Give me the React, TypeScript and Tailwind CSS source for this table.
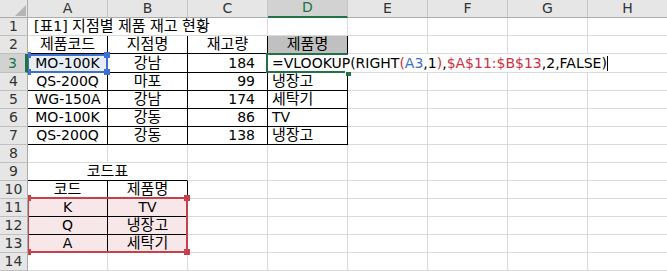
import React from "react";

type Line = "g" | "k" | "n";
type Align = "l" | "c" | "r";

interface CellDef {
  t?: React.ReactNode;
  a?: Align;
  r?: Line;
  b?: Line;
  bg?: string;
  span?: 2 | 3 | 5;
  pad?: string;
}

const RIGHT_LINE: Record<Line, string> = {
  g: "border-r-[#dadada]",
  k: "border-r-black",
  n: "border-r-white",
};
const BOTTOM_LINE: Record<Line, string> = {
  g: "border-b-[#dadada]",
  k: "border-b-black",
  n: "border-b-white",
};
const ALIGN: Record<Align, string> = {
  l: "justify-start pl-[4px]",
  c: "justify-center",
  r: "justify-end pr-[12px]",
};
const SPAN: Record<number, string> = {
  1: "",
  2: "col-span-2",
  3: "col-span-3",
  5: "col-span-5",
};

const COLS = ["A", "B", "C", "D", "E", "F", "G", "H"];

// Hangul runs are set a touch larger so they sit like the sheet's Korean face
function Txt({ s }: { s: string }) {
  const parts = s.split(/([\uAC00-\uD7A3]+)/);
  return (
    <span className="whitespace-pre">
      {parts.map((p, i) =>
        /[\uAC00-\uD7A3]/.test(p) ? (
          <span key={i} className="text-[15px]">
            {p}
          </span>
        ) : (
          <React.Fragment key={i}>{p}</React.Fragment>
        )
      )}
    </span>
  );
}

const blank = (n: number): CellDef[] => Array.from({ length: n }, () => ({}));

const RED = "text-[#cc3140]";
const BLUE = "text-[#3a6fd0]";

const formula = (
  <span className="whitespace-pre">
    =VLOOKUP(RIGHT<span className={RED}>(</span>
    <span className={BLUE}>A3</span>,1<span className={RED}>)</span>,
    <span className={RED}>$A$11:$B$13</span>,2,FALSE)
    <span className="inline-block w-px h-[15px] bg-black align-[-3px]" />
  </span>
);

const stock = (code: string, branch: string, qty: string, name: string): CellDef[] => [
  { t: code, a: "c", r: "k", b: "k" },
  { t: branch, a: "c", r: "k", b: "k" },
  { t: qty, a: "r", r: "k", b: "k" },
  { t: name, a: "l", r: "k", b: "k" },
  ...blank(4),
];

const PINK = "bg-[#f7e7e9]";

const rows: CellDef[][] = [
  [
    { t: "[표1] 지점별 제품 재고 현황", a: "l", span: 3, pad: "pl-[6px]" },
    ...blank(5),
  ],
  [
    { t: "제품코드", a: "c", r: "k", b: "k" },
    { t: "지점명", a: "c", r: "k", b: "k" },
    { t: "재고량", a: "c", r: "k", b: "k" },
    { t: "제품명", a: "c", r: "k", b: "k", bg: "bg-[#c0c0c0]" },
    ...blank(4),
  ],
  [
    { t: "MO-100K", a: "c", r: "k", b: "k", bg: "bg-[#e8eef8]" },
    { t: "강남", a: "c", r: "k", b: "k" },
    { t: "184", a: "r", r: "k", b: "k" },
    { t: formula, a: "l", span: 5, r: "n", b: "g", pad: "pl-[3px]" },
  ],
  stock("QS-200Q", "마포", "99", "냉장고"),
  stock("WG-150A", "강남", "174", "세탁기"),
  stock("MO-100K", "강동", "86", "TV"),
  stock("QS-200Q", "강동", "138", "냉장고"),
  blank(8),
  [{ t: "코드표", a: "c", span: 2, b: "k" }, ...blank(6)],
  [
    { t: "코드", a: "c", r: "k", b: "k" },
    { t: "제품명", a: "c", r: "k", b: "k" },
    ...blank(6),
  ],
  [
    { t: "K", a: "c", r: "k", b: "k", bg: PINK },
    { t: "TV", a: "c", r: "k", b: "k", bg: PINK },
    ...blank(6),
  ],
  [
    { t: "Q", a: "c", r: "k", b: "k", bg: PINK },
    { t: "냉장고", a: "c", r: "k", b: "k", bg: PINK },
    ...blank(6),
  ],
  [
    { t: "A", a: "c", r: "k", b: "k", bg: PINK },
    { t: "세탁기", a: "c", r: "k", b: "k", bg: PINK },
    ...blank(6),
  ],
  blank(8),
];

function Cell({ d }: { d: CellDef }) {
  const r = d.r ?? "g";
  const b = d.b ?? "g";
  const a = d.a ?? "l";
  return (
    <div
      className={`flex items-end pb-[1px] overflow-visible whitespace-nowrap border-r border-b ${RIGHT_LINE[r]} ${BOTTOM_LINE[b]} ${ALIGN[a]} ${d.pad ?? ""} ${SPAN[d.span ?? 1]} ${d.bg || "bg-white"}`}
    >
      {typeof d.t === "string" ? <Txt s={d.t} /> : d.t}
    </div>
  );
}

function CornerCell() {
  return (
    <div className="relative z-20 bg-[#e6e6e6] border-r border-b border-r-[#ababab] border-b-[#ababab] flex items-end justify-end pr-[1px] pb-[1px]">
      <svg width="11" height="11" viewBox="0 0 11 11">
        <polygon points="0,11 11,0 11,11" fill="#b5b5b5" />
      </svg>
    </div>
  );
}

// Excel-style range highlight with square grips at the corners
function RangeBox({ pos, line, fill }: { pos: string; line: string; fill: string }) {
  const grip = `absolute w-[6px] h-[6px] ${fill}`;
  return (
    <div className={`absolute z-10 pointer-events-none border-2 ${line} ${pos}`}>
      <span className={`${grip} -left-[4px] -top-[4px]`} />
      <span className={`${grip} -right-[4px] -top-[4px]`} />
      <span className={`${grip} -left-[4px] -bottom-[4px]`} />
      <span className={`${grip} -right-[4px] -bottom-[4px]`} />
    </div>
  );
}

export default function App() {
  return (
    <div className="w-[667px] h-[271px] overflow-hidden bg-white text-[14px] text-black font-['DejaVu_Sans','Noto_Sans_CJK_KR',sans-serif] leading-[16px]">
      <div className="relative grid grid-cols-[28px_repeat(8,80px)] grid-rows-[18px_18px_18px_19px_repeat(11,18px)] w-[668px]">
        {/* column headers */}
        <CornerCell />
        {COLS.map((c) => {
          const active = c === "D";
          return (
            <div
              key={c}
              className={`relative z-20 flex items-end justify-center pb-[1px] text-[14px] border-r border-r-[#c6c6c6] ${
                active
                  ? "bg-[#d2d2d2] text-[#217346] border-b-2 border-b-[#217346]"
                  : "bg-[#e6e6e6] text-[#333] border-b border-b-[#ababab]"
              }`}
            >
              {c}
            </div>
          );
        })}

        {/* sheet rows */}
        {rows.map((cells, i) => {
          const n = i + 1;
          const active = n === 3;
          return (
            <React.Fragment key={n}>
              <div
                className={`relative z-20 flex items-end justify-center pb-[1px] text-[14px] border-b border-b-[#c0c0c0] ${
                  active
                    ? "bg-[#d2d2d2] text-[#217346] border-r-[3px] border-r-[#217346]"
                    : "bg-[#e6e6e6] text-[#333] border-r border-r-[#ababab]"
                }`}
              >
                {n}
              </div>
              {cells.map((d, j) => (
                <Cell key={j} d={d} />
              ))}
            </React.Fragment>
          );
        })}

        {/* reference A3 */}
        <RangeBox
          pos="left-[27px] top-[54px] w-[81px] h-[19px]"
          line="border-[#3f6fd1]"
          fill="bg-[#3f6fd1]"
        />
        {/* reference $A$11:$B$13 */}
        <RangeBox
          pos="left-[27px] top-[197px] w-[161px] h-[56px]"
          line="border-[#c8404b]"
          fill="bg-[#c8404b]"
        />

        {/* active cell D3 in edit mode: the open right side lets the formula run on */}
        <div className="absolute z-10 left-[266px] top-[53px] w-[82px] h-[20px] border-2 border-r-0 border-[#217346] pointer-events-none">
          <span className="absolute -right-[3px] -bottom-[5px] w-[6px] h-[5px] bg-[#217346] border-l border-t border-white" />
        </div>
      </div>
    </div>
  );
}
